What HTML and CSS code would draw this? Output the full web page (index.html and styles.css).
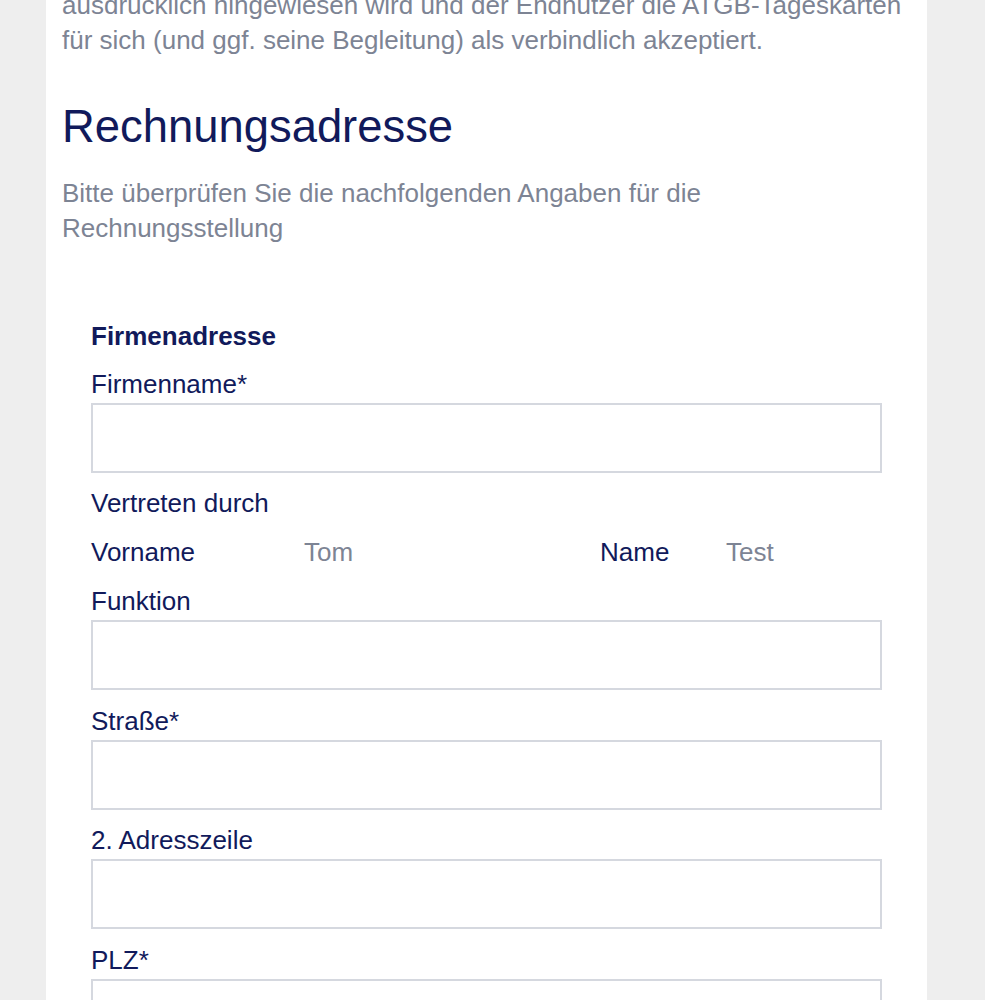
FILE: index.html
```html
<!DOCTYPE html>
<html lang="de">
<head>
<meta charset="utf-8">
<title>Rechnungsadresse</title>
<link rel="stylesheet" href="styles.css">
</head>
<body>
<main class="page">
  <p class="intro">ausdrücklich hingewiesen wird und der Endnutzer die ATGB-Tageskarten für sich (und ggf. seine Begleitung) als verbindlich akzeptiert.</p>
  <h1 class="title">Rechnungsadresse</h1>
  <p class="lead">Bitte überprüfen Sie die nachfolgenden Angaben für die Rechnungsstellung</p>

  <form class="form">
    <div class="section-title">Firmenadresse</div>

    <label class="label" for="firma">Firmenname*</label>
    <input class="field" id="firma" type="text">

    <div class="text-row">Vertreten durch</div>
    <div class="rep-row">
      <span class="label-inline">Vorname</span>
      <span class="value">Tom</span>
      <span class="label-inline">Name</span>
      <span class="value">Test</span>
    </div>

    <label class="label" for="funktion">Funktion</label>
    <input class="field" id="funktion" type="text">

    <label class="label" for="strasse">Straße*</label>
    <input class="field" id="strasse" type="text">

    <label class="label" for="adr2">2. Adresszeile</label>
    <input class="field" id="adr2" type="text">

    <label class="label" for="plz">PLZ*</label>
    <input class="field" id="plz" type="text">
  </form>
</main>
</body>
</html>
```

FILE: styles.css
```css
html, body {
  margin: 0;
  padding: 0;
}

body {
  background: #eeeeee;
  font-family: "Liberation Sans", Arial, Helvetica, sans-serif;
  font-size: 26px;
  line-height: 35px;
  color: #111a5b;
}

.page {
  margin-left: 46px;
  width: 881px;
  min-height: 1100px;
  background: #ffffff;
  padding: 0 16px;
  box-sizing: border-box;
  overflow: hidden;
}

.intro {
  margin: -12.5px 0 0;
  color: #7d8494;
}

.title {
  margin: 42.5px 0 0;
  font-size: 45.4px;
  line-height: 54.5px;
  font-weight: normal;
  color: #111a5b;
}

.lead {
  margin: 21px 0 0;
  color: #7d8494;
}

.form {
  margin-top: 73px;
  padding: 0 29px;
}

.section-title {
  font-weight: bold;
  margin-bottom: 13px;
}

.label {
  display: block;
  margin-bottom: 1px;
}

.field {
  display: block;
  width: 100%;
  height: 70px;
  margin: 0 0 13.5px;
  padding: 0 12px;
  box-sizing: border-box;
  border: 2px solid #d5d8df;
  border-radius: 0;
  background: #ffffff;
  font: inherit;
  color: #111a5b;
  outline: none;
}

.text-row {
  margin-bottom: 13.5px;
}

.rep-row {
  display: grid;
  grid-template-columns: 213px 296px 126px 1fr;
  margin-bottom: 14.5px;
}

.value {
  color: #7d8494;
}
```
